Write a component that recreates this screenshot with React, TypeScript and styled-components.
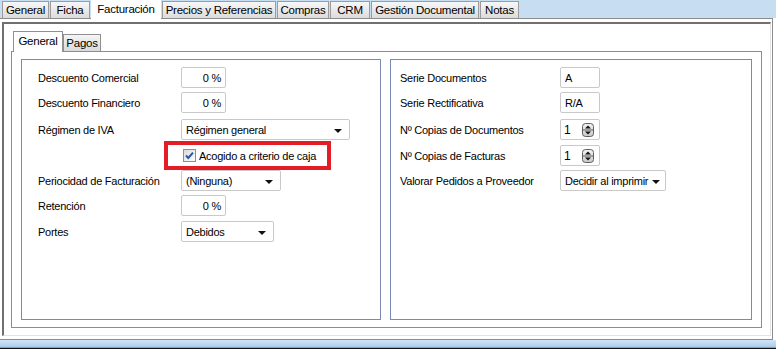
import React from "react";
import styled, { createGlobalStyle, css } from "styled-components";

const GlobalStyle = createGlobalStyle`
  html, body {
    margin: 0;
    padding: 0;
    background: #fff;
  }
  body {
    font-family: "Liberation Sans", Arial, sans-serif;
    font-size: 11px;
    letter-spacing: -0.25px;
    color: #000;
  }
`;

const outerTabs = [
  { label: "General", w: 47 },
  { label: "Ficha", w: 40 },
  { label: "Facturación", w: 70, active: true },
  { label: "Precios y Referencias", w: 114 },
  { label: "Compras", w: 52 },
  { label: "CRM", w: 40 },
  { label: "Gestión Documental", w: 108 },
  { label: "Notas", w: 39 },
];

const SelectArrow = () => <Arrow />;

const Spinner = () => (
  <svg width="12" height="14" viewBox="0 0 12 14">
    <defs>
      <linearGradient id="spin" x1="0" y1="0" x2="0" y2="1">
        <stop offset="0" stopColor="#f4f4f4" />
        <stop offset="1" stopColor="#c9c9c9" />
      </linearGradient>
    </defs>
    <rect x="0.5" y="0.5" width="11" height="13" rx="3" fill="url(#spin)" stroke="#5e5e5e" />
    <line x1="1" y1="7" x2="11" y2="7" stroke="#5e5e5e" />
    <path d="M3 5.5 L6 2.5 L9 5.5 Z" fill="#111" />
    <path d="M3 8.5 L6 11.5 L9 8.5 Z" fill="#111" />
  </svg>
);

const CheckIcon = () => (
  <svg width="13" height="13" viewBox="0 0 13 13">
    <defs>
      <linearGradient id="chk" x1="0" y1="0" x2="1" y2="1">
        <stop offset="0" stopColor="#d9d9d9" />
        <stop offset="1" stopColor="#ffffff" />
      </linearGradient>
    </defs>
    <rect x="0.5" y="0.5" width="12" height="12" fill="url(#chk)" stroke="#8e8e8e" />
    <path d="M3 6.5 L5.3 9 L10 3.6" fill="none" stroke="#2a56a6" strokeWidth="2" />
  </svg>
);

const App: React.FC = () => {
  return (
    <>
      <GlobalStyle />
      <Window>
        <TabStrip>
          {outerTabs.map((t) => (
            <Tab key={t.label} $w={t.w} $active={t.active}>
              {t.label}
            </Tab>
          ))}
        </TabStrip>

        <Body>
          <Frame>
            <InnerTabRow>
              <InnerTab $w={50} $active>
                General
              </InnerTab>
              <InnerTab $w={38}>Pagos</InnerTab>
            </InnerTabRow>

            <InnerPanel>
              <GroupBox $pad={16}>
                <Row $h={25}>
                  <Label $w={143}>Descuento Comercial</Label>
                  <Field $w={45} $right>0 %</Field>
                </Row>
                <Row $h={27}>
                  <Label $w={143}>Descuento Financiero</Label>
                  <Field $w={45} $right>0 %</Field>
                </Row>
                <Row $h={22}>
                  <Label $w={143}>Régimen de IVA</Label>
                  <Combo $w={169}>
                    Régimen general
                    <SelectArrow />
                  </Combo>
                </Row>
                <Row $h={29}>
                  <Label $w={143} />
                  <Highlight>
                    <CheckIcon />
                    <span>Acogido a criterio de caja</span>
                  </Highlight>
                </Row>
                <Row $h={25}>
                  <Label $w={143}>Periocidad de Facturación</Label>
                  <Combo $w={100}>
                    (Ninguna)
                    <SelectArrow />
                  </Combo>
                </Row>
                <Row $h={26}>
                  <Label $w={143}>Retención</Label>
                  <Field $w={45} $right>0 %</Field>
                </Row>
                <Row $h={21}>
                  <Label $w={143}>Portes</Label>
                  <Combo $w={93}>
                    Debidos
                    <SelectArrow />
                  </Combo>
                </Row>
              </GroupBox>

              <GroupBox $pad={9}>
                <Row $h={25}>
                  <Label $w={160}>Serie Documentos</Label>
                  <Field $w={40}>A</Field>
                </Row>
                <Row $h={27}>
                  <Label $w={160}>Serie Rectificativa</Label>
                  <Field $w={40}>R/A</Field>
                </Row>
                <Row $h={26}>
                  <Label $w={160}>Nº Copias de Documentos</Label>
                  <Field $w={40} $spin>
                    1
                    <Spinner />
                  </Field>
                </Row>
                <Row $h={25}>
                  <Label $w={160}>Nº Copias de Facturas</Label>
                  <Field $w={40} $spin>
                    1
                    <Spinner />
                  </Field>
                </Row>
                <Row $h={21}>
                  <Label $w={160}>Valorar Pedidos a Proveedor</Label>
                  <Combo $w={106}>
                    Decidir al imprimir
                    <SelectArrow />
                  </Combo>
                </Row>
              </GroupBox>
            </InnerPanel>
          </Frame>
        </Body>

        <StatusStrip />
      </Window>
    </>
  );
};

const Window = styled.div`
  width: 776px;
  height: 349px;
  display: flex;
  flex-direction: column;
  overflow: hidden;
  background: #fff;
`;

const TabStrip = styled.div`
  height: 18px;
  flex-shrink: 0;
  display: flex;
  align-items: flex-end;
  padding-left: 2px;
  background: #c7ddf1;
  position: relative;
  z-index: 1;
`;

const Tab = styled.div<{ $w: number; $active?: boolean }>`
  width: ${(p) => p.$w}px;
  height: 17px;
  box-sizing: border-box;
  margin-right: 1px;
  border: 1px solid #9c9c9c;
  border-bottom: none;
  background: linear-gradient(#f7f7f7, #dcdcdc);
  display: flex;
  align-items: center;
  justify-content: center;
  font-size: 11.5px;
  white-space: nowrap;
  ${(p) =>
    p.$active &&
    css`
      height: 19px;
      margin-bottom: -1px;
      background: #fff;
      border-color: #fff;
      padding-bottom: 3px;
    `}
`;

const Body = styled.div`
  flex: 1;
  display: flex;
  margin-right: 3px;
  border-top: 1px solid #8c8c8c;
  border-right: 1px solid #8c8c8c;
  border-bottom: 1px solid #8c8c8c;
  padding: 3px 1px 3px 2px;
  min-height: 0;
`;

const Frame = styled.div`
  flex: 1;
  display: flex;
  flex-direction: column;
  border-top: 2px solid #707070;
  border-left: 2px solid #707070;
  border-right: 1px solid #e3e3e3;
  border-bottom: 1px solid #e3e3e3;
  padding: 7px 8px 7px 7px;
`;

const InnerTabRow = styled.div`
  height: 20px;
  flex-shrink: 0;
  display: flex;
  align-items: flex-end;
  padding-left: 2px;
  position: relative;
  z-index: 1;
`;

const InnerTab = styled.div<{ $w: number; $active?: boolean }>`
  width: ${(p) => p.$w}px;
  height: 17px;
  box-sizing: border-box;
  border: 1px solid #909090;
  border-bottom: none;
  background: linear-gradient(#f5f5f5, #dadada);
  display: flex;
  align-items: center;
  justify-content: center;
  font-size: 11.5px;
  ${(p) =>
    p.$active &&
    css`
      height: 21px;
      margin-bottom: -1px;
      background: #fff;
      padding-bottom: 3px;
    `}
`;

const InnerPanel = styled.div`
  flex: 1;
  display: grid;
  grid-template-columns: 360px 1fr;
  gap: 9px;
  border: 1px solid #8d8d8d;
  padding: 7px 9px;
`;

const GroupBox = styled.div<{ $pad: number }>`
  border: 1px solid #7b8ab0;
  padding: 7px 0 0 ${(p) => p.$pad}px;
  display: flex;
  flex-direction: column;
`;

const Row = styled.div<{ $h: number }>`
  height: ${(p) => p.$h}px;
  display: flex;
  align-items: flex-start;
`;

const Label = styled.div<{ $w: number }>`
  width: ${(p) => p.$w}px;
  flex-shrink: 0;
  line-height: 22px;
  white-space: nowrap;
`;

const inputBox = css`
  height: 21px;
  box-sizing: border-box;
  border: 1px solid #c9c9c9;
  border-radius: 2px;
  background: #fff;
  display: flex;
  align-items: center;
  white-space: nowrap;
`;

const Field = styled.div<{ $w: number; $right?: boolean; $spin?: boolean }>`
  ${inputBox};
  width: ${(p) => p.$w}px;
  padding: 0 4px;
  justify-content: ${(p) => (p.$right ? "flex-end" : p.$spin ? "space-between" : "flex-start")};
  ${(p) =>
    p.$spin &&
    css`
      padding: 0 5px 0 3px;
      font-size: 12px;
    `}
`;

const Combo = styled.div<{ $w: number }>`
  ${inputBox};
  width: ${(p) => p.$w}px;
  padding: 0 7px 0 4px;
  justify-content: space-between;
  gap: 4px;
  overflow: hidden;
`;

const Arrow = styled.span`
  flex-shrink: 0;
  width: 0;
  height: 0;
  border-left: 4px solid transparent;
  border-right: 4px solid transparent;
  border-top: 4px solid #111;
  margin-top: 2px;
`;

const Highlight = styled.div`
  margin-left: -17px;
  width: 167px;
  height: 29px;
  box-sizing: border-box;
  border: 4px solid #e21d26;
  display: flex;
  align-items: center;
  gap: 3px;
  padding-left: 15px;
  white-space: nowrap;

  svg {
    flex-shrink: 0;
  }
`;

const StatusStrip = styled.div`
  height: 9px;
  flex-shrink: 0;
  box-sizing: border-box;
  background: linear-gradient(#d2e4f5, #a7c8ea);
  border-bottom: 1px solid #141414;
  box-shadow: inset 0 -1px 0 #4eb2e6;
`;

export default App;
